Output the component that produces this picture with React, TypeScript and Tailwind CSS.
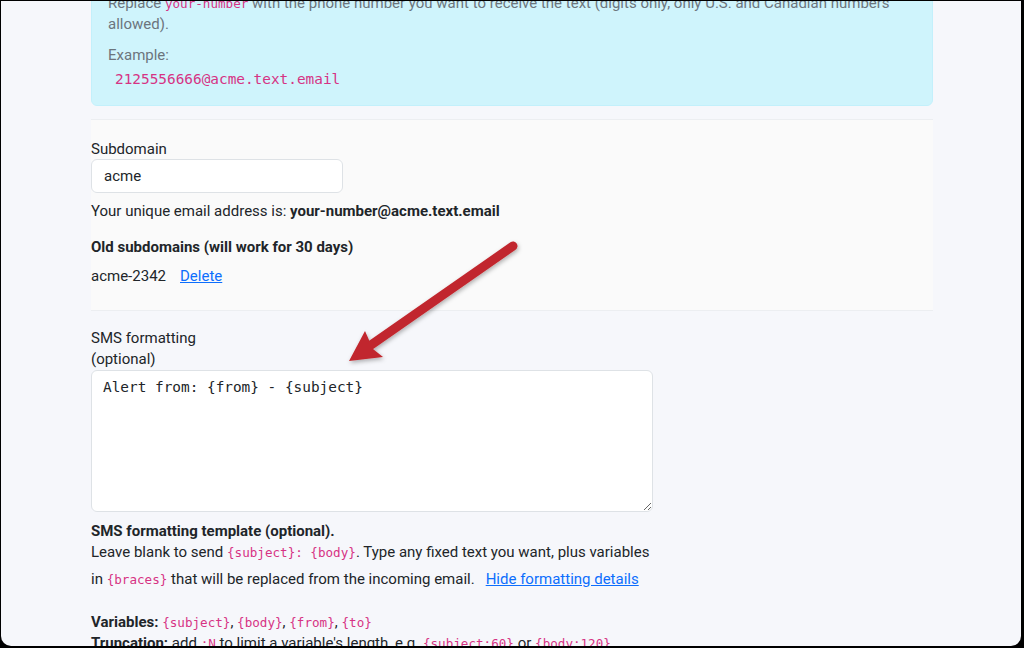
import React from "react"

const code = "font-['DejaVu_Sans_Mono',monospace] text-[#d63384]"

export default function App() {
  return (
    <div className="w-[1024px] h-[648px] bg-black pt-px pl-px pr-[3px] pb-[2px]">
      <div className="relative h-full overflow-hidden rounded-b-[10px] bg-[#f6f7fb] font-['Roboto',sans-serif] text-[15px] leading-[21px] text-[#212529]">
        <div className="ml-[90px] w-[842px]">
          {/* info box */}
          <div className="-mt-[25px] rounded-[6px] border border-[#c3f0fb] bg-[#cff4fc] px-[16px] pt-[16px] pb-[15px] text-[#6c757d]">
            <p className="mb-[10px]">
              Replace <code className={`${code} text-[12.6px]`}>your-number</code> with the phone number you want to receive the text (digits only, only U.S. and Canadian numbers allowed).
            </p>
            <p>Example:</p>
            <div className={`${code} mt-[3px] pl-[7px] text-[14.4px]`}>2125556666@acme.text.email</div>
          </div>

          {/* subdomain */}
          <div className="mt-[13px] border-y border-[#eceef1] bg-[#fafafa] pt-[19px] pb-[23px]">
            <label className="block">Subdomain</label>
            <input
              defaultValue="acme"
              className="-mt-px h-[34px] w-[252px] rounded-[6px] border border-[#dee2e6] bg-white px-[12px] text-[15px] text-[#212529] outline-none"
            />
            <p className="mt-[8px]">
              Your unique email address is: <b className="font-bold">your-number@acme.text.email</b>
            </p>
            <p className="mt-[15px] font-bold">Old subdomains (will work for 30 days)</p>
            <div className="mt-[8px] flex gap-[14px]">
              <span>acme-2342</span>
              <a href="#" className="text-[#0d6efd] underline">Delete</a>
            </div>
          </div>

          {/* sms formatting */}
          <div className="pt-[17px]">
            <label className="block">SMS formatting<br />(optional)</label>
            <textarea
              defaultValue="Alert from: {from} - {subject}"
              className="block h-[142px] w-[562px] rounded-[6px] border border-[#dee2e6] bg-white px-[11px] py-[6px] font-['DejaVu_Sans_Mono',monospace] text-[14.4px] leading-[20px] text-[#212529] outline-none"
            />
            <p className="mt-[9px] font-bold">SMS formatting template (optional).</p>
            <div>
              Leave blank to send <code className={`${code} text-[12.6px]`}>{"{subject}: {body}"}</code>. Type any fixed text you want, plus variables
            </div>
            <div className="mt-[3px] leading-[27px]">
              in <code className={`${code} text-[12.6px]`}>{"{braces}"}</code> that will be replaced from the incoming email.
              <a href="#" className="ml-[11px] text-[#0d6efd] underline">Hide formatting details</a>
            </div>
            <p className="mt-[19px]">
              <b className="font-bold">Variables:</b> <code className={`${code} text-[12.6px]`}>{"{subject}"}</code>, <code className={`${code} text-[12.6px]`}>{"{body}"}</code>, <code className={`${code} text-[12.6px]`}>{"{from}"}</code>, <code className={`${code} text-[12.6px]`}>{"{to}"}</code>
            </p>
            <p>
              <b className="font-bold">Truncation:</b> add <code className={`${code} text-[12.6px]`}>:N</code> to limit a variable's length, e.g. <code className={`${code} text-[12.6px]`}>{"{subject:60}"}</code> or <code className={`${code} text-[12.6px]`}>{"{body:120}"}</code>
            </p>
          </div>
        </div>

        {/* annotation arrow */}
        <svg className="pointer-events-none absolute left-0 top-0" width="1020" height="645" viewBox="0 0 1020 645">
          <defs>
            <filter id="sh" x="-20%" y="-20%" width="140%" height="140%">
              <feDropShadow dx="1" dy="2" stdDeviation="2" floodColor="#000" floodOpacity="0.3" />
            </filter>
          </defs>
          <g filter="url(#sh)" fill="#c1272d" stroke="none">
            <line x1="512" y1="245" x2="370" y2="344" stroke="#c1272d" strokeWidth="9" strokeLinecap="round" />
            <polygon points="348,360 364,330 372,348 382,356" />
          </g>
        </svg>
      </div>
    </div>
  )
}
